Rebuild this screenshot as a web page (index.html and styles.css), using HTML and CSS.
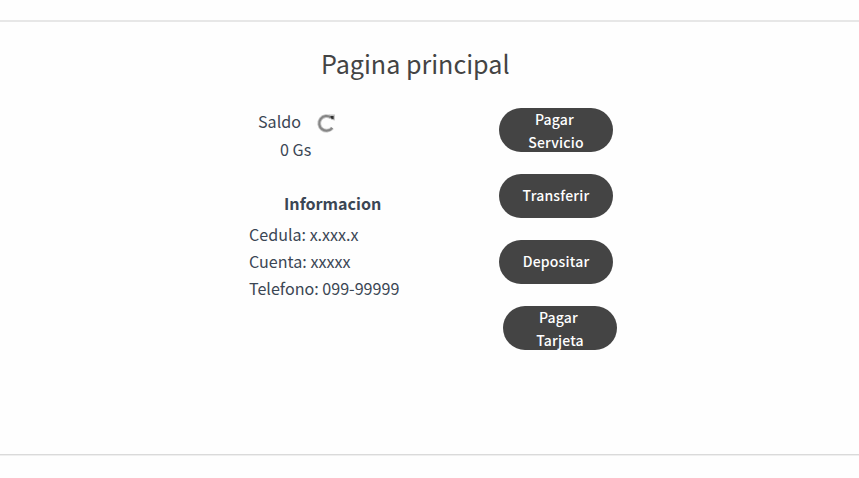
FILE: index.html
```
<!DOCTYPE html>
<html lang="es">
<head>
<meta charset="utf-8">
<title>Pagina principal</title>
<link rel="stylesheet" href="styles.css">
</head>
<body>
<main class="page">
  <h1 class="title"><span>Pagina principal</span></h1>
  <div class="content">
    <section class="account">
      <div class="balance"><span class="label">Saldo</span>
        <svg class="refresh" viewBox="0 0 20 20" aria-hidden="true"><path class="halo" d="M12.6 1.4h6.2v6l-3.6-.6z"/><path class="edge" d="M16.3 14.8A7.3 7.3 0 1 1 15 4.6"/><path class="arc" d="M16.3 14.8A7.3 7.3 0 1 1 15 4.6"/><path class="tip" d="M14.4 3h3.2v3.2l-2.5-.6z"/></svg>
      </div>
      <p class="amount"><span>0 Gs</span></p>
      <h2 class="subtitle"><span>Informacion</span></h2>
      <p class="row"><span>Cedula: x.xxx.x</span></p>
      <p class="row"><span>Cuenta: xxxxx</span></p>
      <p class="row"><span>Telefono: 099-99999</span></p>
    </section>
    <nav class="actions">
      <button class="btn double"><span class="first">Pagar</span><span>Servicio</span></button>
      <button class="btn"><span>Transferir</span></button>
      <button class="btn"><span>Depositar</span></button>
      <button class="btn double shifted"><span class="first">Pagar</span><span>Tarjeta</span></button>
    </nav>
  </div>
</main>
</body>
</html>
```
FILE: styles.css
```
* { box-sizing: border-box; }
body {
  margin: 0;
  padding-top: 20px;
  height: 478px;
  overflow: hidden;
  background: #fefefe;
  color: #3b4654;
  font-family: "Noto Sans CJK JP", sans-serif;
  font-size: 16.1px;
}
h1, h2, p { margin: 0; }
.page {
  height: 436px;
  border-top: 2px solid #e7e7e7;
  border-bottom: 1px solid #efefef;
  box-shadow: inset 0 -1px #dadada;
}
.title {
  height: 86px;
  padding: 24px 0 0 321px;
  font-size: 25.1px;
  font-weight: 400;
  line-height: 34px;
  color: #444;
}
.content { display: flex; }
.account { width: 250px; margin-left: 249px; }
.balance { display: flex; height: 27px; line-height: 26px; padding-left: 9px; }
.label { width: 58px; }
.refresh { width: 20px; height: 20px; margin-top: 5px; }
.arc { fill: none; stroke: #858585; stroke-width: 2; }
.edge { fill: none; stroke: #c4c4c4; stroke-width: 3.8; }
.halo { fill: #c0c0c0; }
.tip { fill: #303030; }
.amount { height: 53px; line-height: 28px; padding-left: 31px; }
.subtitle { height: 33px; font-size: 16.1px; line-height: 30px; padding-left: 35px; }
.row { height: 27px; line-height: 27px; }
.actions { display: flex; flex-direction: column; gap: 22px; }
.btn {
  display: flex;
  flex-direction: column;
  align-items: center;
  justify-content: center;
  width: 114px;
  height: 44px;
  padding: 0 0 2px;
  border: 0;
  border-radius: 22px;
  background: #444;
  color: #fff;
  font-family: inherit;
  font-size: 14px;
  font-weight: 500;
  line-height: 23px;
  letter-spacing: .2px;
}
.double { padding: 2px 0 0; }
.first { padding-right: 3px; }
.shifted { margin-left: 4px; }
```
